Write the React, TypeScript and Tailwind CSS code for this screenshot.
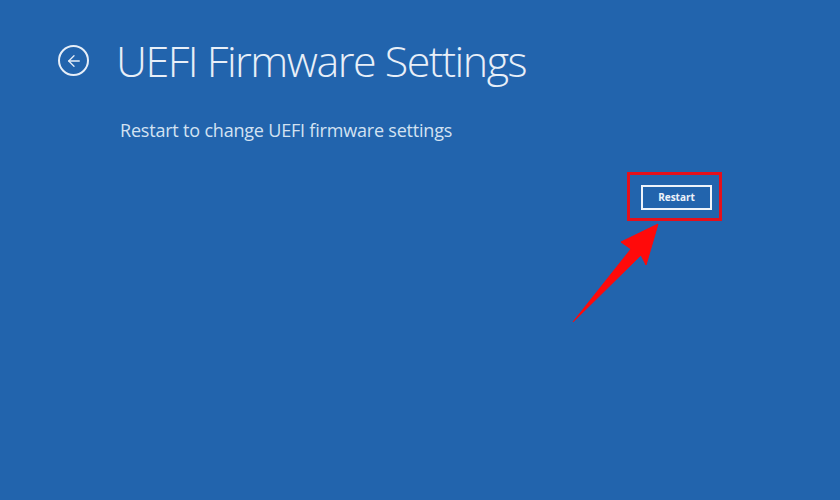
import { ArrowLeft } from "lucide-react";

function BackButton() {
  return (
    <button
      type="button"
      className="flex h-[31px] w-[31px] items-center justify-center rounded-full border-2 border-[#e6eef8] text-[#e6eef8]"
    >
      <ArrowLeft className="h-[18px] w-[18px]" strokeWidth={1.75} />
    </button>
  );
}

function PointerArrow() {
  return (
    <svg
      className="absolute left-[566px] top-[218px]"
      width="100"
      height="112"
      viewBox="566 218 100 112"
    >
      <polygon
        points="658,224 621,242 631,249 573,322 641,255 646,265"
        fill="#ff0a0a"
        stroke="#ff0a0a"
        strokeWidth="1"
        strokeLinejoin="round"
      />
    </svg>
  );
}

export default function App() {
  return (
    <div
      className="relative h-[500px] w-[840px] overflow-hidden bg-[#2264ad] text-[#e8eff8]"
      style={{ fontFamily: '"Open Sans", "Noto Sans", sans-serif' }}
    >
      <div className="pl-[58px] pt-[39px]">
        <div className="flex items-center gap-[27px]">
          <BackButton />
          <h1 className="text-[43px] font-light leading-none tracking-[-1.5px]">
            UEFI Firmware Settings
          </h1>
        </div>

        <p className="ml-[62px] mt-[39px] text-[18px] leading-none tracking-[-0.2px] text-[#d3e2f2]">
          Restart to change UEFI firmware settings
        </p>

        <div className="mt-[33px] flex pl-[569px]">
          <div className="border-[3px] border-[#e4101c] py-[8px] pl-[11px] pr-[7px]">
            <button
              type="button"
              className="h-[25px] w-[71px] border-2 border-[#eef3fa] text-[10px] font-bold text-[#eef3fa]"
            >
              Restart
            </button>
          </div>
        </div>
      </div>

      <PointerArrow />
    </div>
  );
}
